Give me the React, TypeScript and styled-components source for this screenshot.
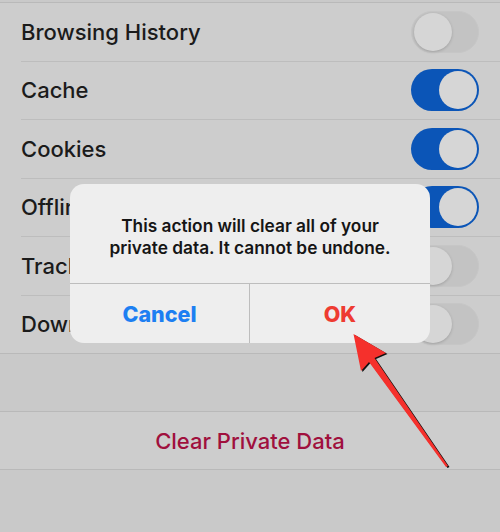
import React from "react";
import styled, { createGlobalStyle } from "styled-components";

const Global = createGlobalStyle`
  html, body { margin: 0; padding: 0; background: #c9c9c9; }
  body { font-family: Inter, "Liberation Sans", Arial, sans-serif; -webkit-font-smoothing: antialiased; }
`;

const Page = styled.div`
  position: relative;
  width: 500px;
  height: 532px;
  overflow: hidden;
  background: #c9c9c9;
  padding-top: 2px;
  box-sizing: border-box;
`;

const Group = styled.div`
  background: #cdcdcd;
  border-top: 1px solid #b9b9b9;
  border-bottom: 1px solid #b9b9b9;
`;

const Row = styled.div<{ $last?: boolean }>`
  height: 57.5px;
  margin-left: 21px;
  padding-right: 21px;
  display: flex;
  align-items: center;
  justify-content: space-between;
  border-bottom: ${(p) => (p.$last ? "none" : "1px solid #bdbdbd")};
`;

const Label = styled.span`
  font-size: 22px;
  font-weight: 500;
  color: #1b1b1b;
`;

const Track = styled.div<{ $on: boolean }>`
  width: 68px;
  height: 42px;
  border-radius: 21px;
  box-sizing: border-box;
  background: ${(p) => (p.$on ? "#0b55b7" : "#c3c3c3")};
  border: ${(p) => (p.$on ? "none" : "1.5px solid #c6c6c6")};
  display: flex;
  align-items: center;
  justify-content: ${(p) => (p.$on ? "flex-end" : "flex-start")};
  padding: 2px;
`;

const Knob = styled.div<{ $on: boolean }>`
  width: 38px;
  height: 38px;
  border-radius: 50%;
  background: #d6d6d6;
  box-shadow: ${(p) => (p.$on ? "none" : "0 1px 3px rgba(0,0,0,0.18)")};
`;

const Gap = styled.div`
  height: 57px;
`;

const ActionRow = styled.div`
  height: 57px;
  display: flex;
  align-items: center;
  justify-content: center;
  font-size: 22px;
  font-weight: 500;
  color: #a0103d;
`;

const Dialog = styled.div`
  position: absolute;
  left: 70px;
  top: 184px;
  width: 360px;
  height: 159px;
  border-radius: 14px;
  background: #eeeeee;
  overflow: hidden;
  display: flex;
  flex-direction: column;
`;

const Message = styled.div`
  height: 100px;
  box-sizing: border-box;
  padding: 6px 28px 0;
  display: flex;
  align-items: center;
  justify-content: center;
  text-align: center;
  font-size: 17.3px;
  line-height: 22px;
  font-weight: 600;
  color: #151515;
  border-bottom: 1px solid #bdbdbd;
`;

const Buttons = styled.div`
  flex: 1;
  display: grid;
  grid-template-columns: 1fr 1fr;
`;

const DialogButton = styled.div<{ $color: string; $divider?: boolean }>`
  display: flex;
  align-items: center;
  justify-content: center;
  font-size: 21.5px;
  font-weight: 800;
  color: ${(p) => p.$color};
  border-right: ${(p) => (p.$divider ? "1px solid #bdbdbd" : "none")};
`;

const Arrow = styled.svg`
  position: absolute;
  left: 0;
  top: 0;
  width: 500px;
  height: 532px;
  pointer-events: none;
`;

const rows: { label: string; on: boolean }[] = [
  { label: "Browsing History", on: false },
  { label: "Cache", on: true },
  { label: "Cookies", on: true },
  { label: "Offline Website Data", on: true },
  { label: "Tracking Protection", on: false },
  { label: "Downloaded Files", on: false },
];

export default function App() {
  return (
    <>
      <Global />
      <Page>
        <Group>
          {rows.map((r, i) => (
            <Row key={r.label} $last={i === rows.length - 1}>
              <Label>{r.label}</Label>
              <Track $on={r.on}>
                <Knob $on={r.on} />
              </Track>
            </Row>
          ))}
        </Group>
        <Gap />
        <Group>
          <ActionRow>Clear Private Data</ActionRow>
        </Group>
        <Dialog>
          <Message>
            This action will clear all of your private data. It cannot be undone.
          </Message>
          <Buttons>
            <DialogButton $color="#1d7ff2" $divider>
              Cancel
            </DialogButton>
            <DialogButton $color="#ee3b31">OK</DialogButton>
          </Buttons>
        </Dialog>
        <Arrow viewBox="0 0 500 532">
          <path
            d="M353.5 334 L386 353 L374.5 358 L448 466 L446 467 L369 362 L361 371 Z"
            fill="#111"
            transform="translate(1.5,1)"
          />
          <path
            d="M353.5 334 L386 353 L374.5 358 L448 466 L446 467 L369 362 L361 371 Z"
            fill="#f5302c"
          />
        </Arrow>
      </Page>
    </>
  );
}
